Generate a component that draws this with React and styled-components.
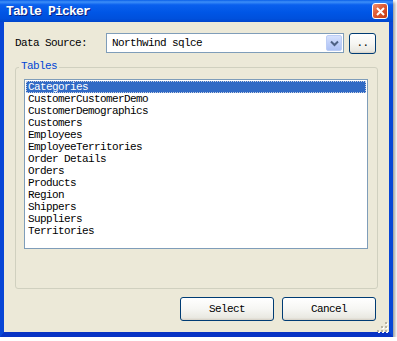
import React, { useState } from "react";
import styled, { createGlobalStyle } from "styled-components";

const GlobalStyle = createGlobalStyle`
    body {
        margin: 0;
        background: #ffffff;
        font-family: "Liberation Mono", "DejaVu Sans Mono", monospace;
    }
`;

const Window = styled.div`
    display: flex;
    flex-direction: column;
    width: 393px;
    height: 337px;
    box-shadow: 2px 2px 3px rgba(0, 0, 0, 0.4);
`;

const TitleBar = styled.div`
    display: flex;
    align-items: center;
    justify-content: space-between;
    height: 22px;
    padding: 0 5px 0 6px;
    background: linear-gradient(to bottom, #0a5fe8 0%, #3d8ff8 9%, #0a60ee 22%, #0056e6 55%, #0050dc 85%, #0045cc 100%);
    color: #ffffff;
    font-size: 13px;
    font-weight: bold;
    letter-spacing: -0.8px;
    text-shadow: 1px 1px 0 #0a1f80;
`;

const CloseButton = styled.div`
    display: flex;
    align-items: center;
    justify-content: center;
    width: 14px;
    height: 14px;
    border: 1px solid #ffffff;
    border-radius: 3px;
    background: linear-gradient(135deg, #f08e6c 0%, #de5a34 45%, #c4390f 100%);
`;

const Frame = styled.div`
    flex: 1;
    display: flex;
    flex-direction: column;
    background: #ece9d8;
    border-left: 4px solid #0846d6;
    border-right: 4px solid #0846d6;
    border-bottom: 5px solid #0833c4;
    padding: 10px 0 0 11px;
    position: relative;
`;

const SourceRow = styled.div`
    display: flex;
    align-items: center;
    height: 22px;
    font-size: 11px;
    letter-spacing: -0.6px;
    color: #000000;
`;

const Label = styled.span`
    width: 91px;
`;

const Combo = styled.div`
    display: flex;
    align-items: center;
    justify-content: space-between;
    width: 238px;
    height: 20px;
    box-sizing: border-box;
    border: 1px solid #7f9db9;
    background: #ffffff;
    padding: 0 1px 0 5px;
`;

const DropButton = styled.div`
    display: flex;
    align-items: center;
    justify-content: center;
    width: 16px;
    height: 16px;
    box-sizing: border-box;
    border: 1px solid #bccdf5;
    border-radius: 2px;
    background: linear-gradient(to bottom, #d6e2fd 0%, #bccdf9 60%, #adc2f5 100%);
`;

const Button = styled.button`
    width: ${(p) => p.$w}px;
    height: ${(p) => p.$h}px;
    margin-left: ${(p) => p.$gap || 0}px;
    box-sizing: border-box;
    border: 1px solid #003c74;
    border-radius: 3px;
    background: linear-gradient(to bottom, #ffffff 0%, #f6f6f3 50%, #e9e8e1 90%, #d6d0c5 100%);
    font-family: "Liberation Mono", monospace;
    font-size: 11px;
    letter-spacing: -0.6px;
    color: #000000;
    padding: 0;
`;

const GroupBox = styled.div`
    position: relative;
    width: 363px;
    height: 222px;
    box-sizing: border-box;
    margin-top: 13px;
    border: 1px solid #d0d0bf;
    border-radius: 3px;
    padding: 11px 0 0 8px;
`;

const Legend = styled.span`
    position: absolute;
    top: -8px;
    left: 3px;
    padding: 0 2px;
    background: #ece9d8;
    color: #0046d5;
    font-size: 11px;
    letter-spacing: -0.6px;
`;

const ListBox = styled.ul`
    list-style: none;
    margin: 0;
    padding: 1px;
    width: 344px;
    height: 170px;
    box-sizing: border-box;
    border: 1px solid #7f9db9;
    background: #ffffff;
`;

const Item = styled.li`
    height: 12px;
    line-height: 12px;
    padding-left: 2px;
    font-size: 11px;
    letter-spacing: -0.6px;
    color: ${(p) => (p.$selected ? "#ffffff" : "#000000")};
    background: ${(p) => (p.$selected ? "#316ac5" : "transparent")};
    outline: ${(p) => (p.$selected ? "1px dotted #c8d0e0" : "none")};
    outline-offset: -1px;
    white-space: nowrap;
`;

const ButtonRow = styled.div`
    display: flex;
    justify-content: flex-end;
    margin-top: 8px;
    padding-right: 13px;
`;

const Grip = styled.div`
    position: absolute;
    right: 1px;
    bottom: 1px;
    width: 11px;
    height: 11px;
`;

const tables = [
    "Categories",
    "CustomerCustomerDemo",
    "CustomerDemographics",
    "Customers",
    "Employees",
    "EmployeeTerritories",
    "Order Details",
    "Orders",
    "Products",
    "Region",
    "Shippers",
    "Suppliers",
    "Territories",
];

export default function App() {
    const [selected, setSelected] = useState(0);

    return (
        <>
            <GlobalStyle />
            <Window>
                <TitleBar>
                    <span>Table Picker</span>
                    <CloseButton>
                        <svg width="9" height="9" viewBox="0 0 9 9">
                            <path d="M1 1 L8 8 M8 1 L1 8" stroke="#ffffff" strokeWidth="2" />
                        </svg>
                    </CloseButton>
                </TitleBar>
                <Frame>
                    <SourceRow>
                        <Label>Data Source:</Label>
                        <Combo>
                            <span>Northwind sqlce</span>
                            <DropButton>
                                <svg width="9" height="7" viewBox="0 0 9 7">
                                    <path d="M1 1.5 L4.5 5 L8 1.5" stroke="#4d6185" strokeWidth="2" fill="none" />
                                </svg>
                            </DropButton>
                        </Combo>
                        <Button $w={27} $h={21} $gap={5}>..</Button>
                    </SourceRow>

                    <GroupBox>
                        <Legend>Tables</Legend>
                        <ListBox>
                            {tables.map((t, i) => (
                                <Item key={t} $selected={i === selected} onClick={() => setSelected(i)}>
                                    {t}
                                </Item>
                            ))}
                        </ListBox>
                    </GroupBox>

                    <ButtonRow>
                        <Button $w={94} $h={24}>Select</Button>
                        <Button $w={94} $h={24} $gap={8}>Cancel</Button>
                    </ButtonRow>

                    <Grip>
                        <svg width="11" height="11" viewBox="0 0 11 11">
                            {[[8, 0], [8, 4], [4, 4], [8, 8], [4, 8], [0, 8]].map(([x, y]) => (
                                <g key={x + "-" + y}>
                                    <rect x={x + 1} y={y + 1} width="2" height="2" fill="#ffffff" />
                                    <rect x={x} y={y} width="2" height="2" fill="#b8b4a2" />
                                </g>
                            ))}
                        </svg>
                    </Grip>
                </Frame>
            </Window>
        </>
    );
}
